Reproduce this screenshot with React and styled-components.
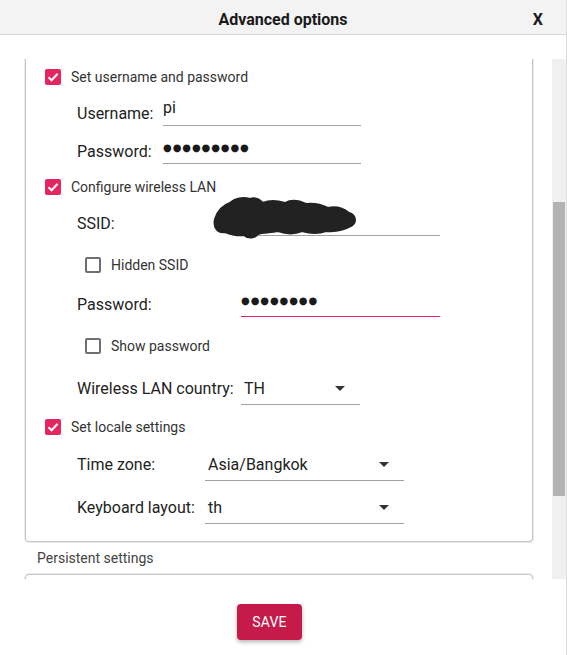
import React from "react";
import styled, { createGlobalStyle } from "styled-components";

const GlobalStyle = createGlobalStyle`
  html, body {
    margin: 0;
    padding: 0;
    background: #fff;
  }
  body {
    font-family: Roboto, "Liberation Sans", Arial, sans-serif;
    color: #222;
    overflow: hidden;
  }
`;

const Dialog = styled.div`
  width: 566px;
  height: 655px;
  display: flex;
  flex-direction: column;
  background: #fff;
  border-right: 1px solid #dcdcdc;
`;

const Header = styled.div`
  height: 30px;
  padding-top: 4px;
  flex: none;
  background: #f3f3f3;
  border-bottom: 1px solid #d6d6d6;
  display: flex;
  align-items: center;
  justify-content: center;
  position: relative;
`;

const Title = styled.div`
  font-size: 16px;
  font-weight: 700;
  color: #1a1a1a;
`;

const CloseButton = styled.div`
  position: absolute;
  right: 23px;
  top: 4px;
  height: 30px;
  display: flex;
  align-items: center;
  font-size: 16px;
  font-weight: 700;
  color: #1a1a1a;
`;

const Main = styled.div`
  flex: none;
  padding-top: 24px;
  display: flex;
`;

const Viewport = styled.div`
  flex: 1;
  height: 520px;
  overflow: hidden;
  padding: 0 19px 0 25px;
`;

const Scrollbar = styled.div`
  width: 14px;
  height: 520px;
  background: #f0f0f0;
  flex: none;
`;

const Thumb = styled.div`
  margin: 143px 0 0 1px;
  width: 12px;
  height: 294px;
  background: #b3b3b3;
`;

const Group = styled.div`
  border: 1px solid #c4c4c4;
  box-shadow: 0 0 0 1px #ececec;
  border-top: ${({ $open }) => ($open ? "none" : "1px solid #c4c4c4")};
  border-radius: ${({ $open }) => ($open ? "0 0 4px 4px" : "4px 4px 0 0")};
  padding: 5px 0 17px 19px;
  min-height: ${({ $min }) => $min || 0}px;
  display: flex;
  flex-direction: column;
`;

const GroupLabel = styled.div`
  margin: 6px 0 6px 12px;
  font-size: 14px;
  line-height: 20px;
  color: #444;
`;

const CheckRow = styled.label`
  display: flex;
  align-items: center;
  height: 24px;
  gap: 10px;
  margin-top: ${({ $mt }) => $mt || 0}px;
  margin-left: ${({ $indent }) => $indent || 0}px;
  font-size: 14px;
  line-height: 16px;
  padding-top: 1px;
  box-sizing: border-box;
  color: #333;
`;

const Box = styled.span`
  width: 16px;
  height: 16px;
  box-sizing: border-box;
  border-radius: 2px;
  flex: none;
  display: flex;
  align-items: center;
  justify-content: center;
  background: ${({ $checked }) => ($checked ? "#e6245f" : "#fff")};
  border: ${({ $checked }) => ($checked ? "none" : "2px solid #6f6f6f")};
`;

const FieldRow = styled.div`
  display: flex;
  align-items: center;
  margin-left: 32px;
  margin-top: ${({ $mt }) => $mt || 0}px;
  position: relative;
`;

const FieldLabel = styled.div`
  width: ${({ $w }) => $w}px;
  flex: none;
  font-size: 16px;
  line-height: 20px;
  padding-top: 1px;
  color: #222;
`;

const TextInput = styled.div`
  width: ${({ $w }) => $w}px;
  height: 26px;
  box-sizing: border-box;
  border-bottom: 1px solid ${({ $focus }) => ($focus ? "#e6245f" : "#a0a0a0")};
  font-size: 16px;
  line-height: 16px;
  color: #222;
`;

const Dots = styled.span`
  font-family: "DejaVu Sans", sans-serif;
  font-size: 10px;
  letter-spacing: 0.9px;
  line-height: 18px;
  color: #1a1a1a;
`;

const Select = styled.div`
  width: ${({ $w }) => $w}px;
  height: 34px;
  box-sizing: border-box;
  border-bottom: 1px solid #a0a0a0;
  display: flex;
  align-items: center;
  justify-content: space-between;
  padding: 1px 15px 0 3px;
  font-size: 16px;
  color: #222;
`;

const Caret = styled.span`
  width: 0;
  height: 0;
  border-left: 5px solid transparent;
  border-right: 5px solid transparent;
  border-top: 5px solid #333;
`;

const Scribble = styled.svg`
  position: absolute;
  left: 133px;
  top: -15px;
  pointer-events: none;
`;

const Footer = styled.div`
  flex: 1;
  display: flex;
  justify-content: center;
  align-items: flex-start;
  padding: 25px 27px 0 0;
`;

const SaveButton = styled.button`
  height: 36px;
  padding: 0 15px;
  border: none;
  border-radius: 4px;
  background: #c51a4a;
  color: #fff;
  font-family: Roboto, "Liberation Sans", Arial, sans-serif;
  font-size: 14px;
  letter-spacing: 0.2px;
  box-shadow: 0 2px 4px rgba(0, 0, 0, 0.3);
`;

const Tick = () => (
  <svg width="12" height="10" viewBox="0 0 12 10">
    <path d="M1.5 5.2 L4.6 8.2 L10.6 1.8" fill="none" stroke="#fff" strokeWidth="2" />
  </svg>
);

const Check = ({ checked, label, mt, indent }) => (
  <CheckRow $mt={mt} $indent={indent}>
    <Box $checked={checked}>{checked && <Tick />}</Box>
    {label}
  </CheckRow>
);

const blob =
  "M5 24 C8 15 14 10 20 8 C25 3 33 2 40 4 C45 2 50 5 53 8 C60 5 68 6 75 8 " +
  "C82 4 90 6 96 9 C104 8 112 10 118 13 C126 11 134 14 139 18 C146 20 147 28 141 31 " +
  "C134 35 126 37 116 36 C108 39 99 38 92 36 C85 39 76 39 68 36 C60 38 53 37 48 39 " +
  "C45 43 38 44 34 40 C28 41 20 39 15 37 C8 38 3 33 5 24 Z";

const App = () => {
  return (
    <Dialog>
      <GlobalStyle />
      <Header>
        <Title>Advanced options</Title>
        <CloseButton>X</CloseButton>
      </Header>
      <Main>
        <Viewport>
          <Group $open>
            <Check checked label="Set username and password" />
            <FieldRow $mt={12}>
              <FieldLabel $w={86}>Username:</FieldLabel>
              <TextInput $w={198}>pi</TextInput>
            </FieldRow>
            <FieldRow $mt={12}>
              <FieldLabel $w={86}>Password:</FieldLabel>
              <TextInput $w={198}>
                <Dots>●●●●●●●●●</Dots>
              </TextInput>
            </FieldRow>
            <Check checked label="Configure wireless LAN" mt={10} />
            <FieldRow $mt={12}>
              <FieldLabel $w={164}>SSID:</FieldLabel>
              <TextInput $w={199} />
              <Scribble width="150" height="48" viewBox="0 0 150 48">
                <path d={blob} fill="#222" stroke="#222" strokeWidth="2" strokeLinejoin="round" />
              </Scribble>
            </FieldRow>
            <Check label="Hidden SSID" mt={16} indent={40} />
            <FieldRow $mt={15}>
              <FieldLabel $w={164}>Password:</FieldLabel>
              <TextInput $w={199} $focus>
                <Dots>●●●●●●●●</Dots>
              </TextInput>
            </FieldRow>
            <Check label="Show password" mt={16} indent={40} />
            <FieldRow $mt={14}>
              <FieldLabel $w={164}>Wireless LAN country:</FieldLabel>
              <Select $w={119}>
                TH
                <Caret />
              </Select>
            </FieldRow>
            <Check checked label="Set locale settings" mt={9} />
            <FieldRow $mt={9}>
              <FieldLabel $w={128}>Time zone:</FieldLabel>
              <Select $w={199}>
                Asia/Bangkok
                <Caret />
              </Select>
            </FieldRow>
            <FieldRow $mt={9}>
              <FieldLabel $w={128}>Keyboard layout:</FieldLabel>
              <Select $w={199}>
                th
                <Caret />
              </Select>
            </FieldRow>
          </Group>
          <GroupLabel>Persistent settings</GroupLabel>
          <Group $min={60} />
        </Viewport>
        <Scrollbar>
          <Thumb />
        </Scrollbar>
      </Main>
      <Footer>
        <SaveButton>SAVE</SaveButton>
      </Footer>
    </Dialog>
  );
};

export default App;
